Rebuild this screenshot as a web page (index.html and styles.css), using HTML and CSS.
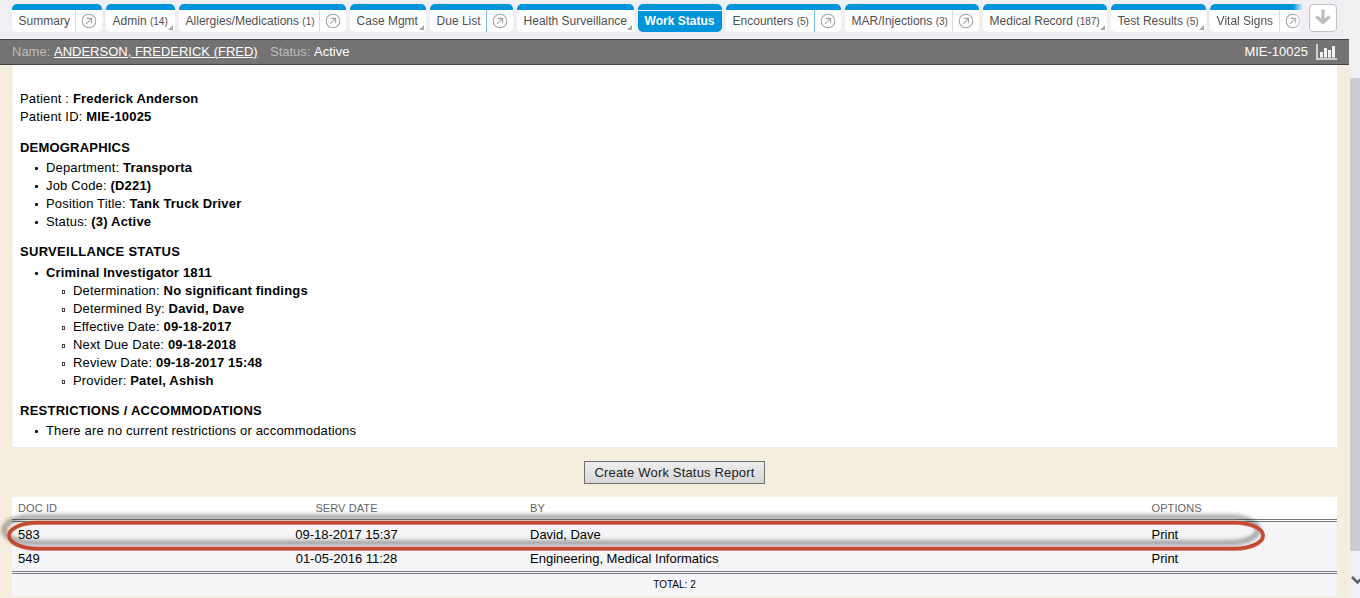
FILE: index.html
```html
<!DOCTYPE html>
<html lang="en">
<head>
<meta charset="utf-8">
<title>Work Status</title>
<link rel="stylesheet" href="styles.css">
</head>
<body>
<svg class="defs" width="0" height="0">
  <symbol id="open" viewBox="0 0 16 16"><circle cx="8" cy="8" r="6.8" fill="none" stroke="#a4a4a6" stroke-width="1.1"/><path d="M5.2 10.8 10.4 5.6M5.7 5.4h4.9v4.9" fill="none" stroke="#a4a4a6" stroke-width="1.1"/></symbol>
</svg>
<div class="app">
  <div class="main">
    <nav class="tabs">
      <div class="tab w-summary"><span class="label">Summary</span><span class="pop"><svg><use href="#open"/></svg></span></div>
      <div class="tab menu w-admin"><span class="label">Admin <small>(14)</small></span></div>
      <div class="tab w-allergies"><span class="label">Allergies/Medications <small>(1)</small></span><span class="pop"><svg><use href="#open"/></svg></span></div>
      <div class="tab menu w-case"><span class="label">Case Mgmt</span></div>
      <div class="tab w-due"><span class="label">Due List</span><span class="pop edge"><svg><use href="#open"/></svg></span></div>
      <div class="tab menu w-health"><span class="label">Health Surveillance</span></div>
      <div class="tab active w-work"><span class="label">Work Status</span></div>
      <div class="tab w-encounters"><span class="label">Encounters <small>(5)</small></span><span class="pop edge"><svg><use href="#open"/></svg></span></div>
      <div class="tab w-mar"><span class="label">MAR/Injections <small>(3)</small></span><span class="pop"><svg><use href="#open"/></svg></span></div>
      <div class="tab menu w-medical"><span class="label">Medical Record <small>(187)</small></span></div>
      <div class="tab menu w-test"><span class="label">Test Results <small>(5)</small></span></div>
      <div class="tab w-vital"><span class="label">Vital Signs</span><span class="pop"><svg><use href="#open"/></svg></span></div>
      <button class="more"><svg width="18" height="18" viewBox="0 0 18 18"><path d="M9 1.500v13M2.300 8.500 9 14.500l6.700-6" fill="none" stroke="#bfbfbf" stroke-width="3.400"/></svg></button>
    </nav>
    <header class="patient">
      <span class="key">Name:</span><a class="name">ANDERSON, FREDERICK (FRED)</a>
      <span class="key status">Status:</span><span class="state">Active</span>
      <span class="mrn">MIE-10025</span>
      <svg class="chart" width="21" height="16" viewBox="0 0 21 16"><path d="M1 0v15h20" fill="none" stroke="#f0f0f0" stroke-width="1.500"/><path d="M4 8h3v5.500H4zM8 4h3v9.500H8zM12 6h3v7.500h-3zM16 2h3v11.500h-3z" fill="#f2f2f2"/></svg>
    </header>
    <section class="report">
      <p>Patient : <b>Frederick Anderson</b></p>
      <p class="pid">Patient ID: <b>MIE-10025</b></p>
      <h2 class="h-demo">DEMOGRAPHICS</h2>
      <ul>
        <li>Department: <b>Transporta</b></li>
        <li>Job Code: <b>(D221)</b></li>
        <li>Position Title: <b>Tank Truck Driver</b></li>
        <li>Status: <b>(3) Active</b></li>
      </ul>
      <h2 class="h-surv">SURVEILLANCE STATUS</h2>
      <ul>
        <li><b>Criminal Investigator 1811</b>
          <ul class="sub">
            <li>Determination: <b>No significant findings</b></li>
            <li>Determined By: <b>David, Dave</b></li>
            <li>Effective Date: <b>09-18-2017</b></li>
            <li>Next Due Date: <b>09-18-2018</b></li>
            <li>Review Date: <b>09-18-2017 15:48</b></li>
            <li>Provider: <b>Patel, Ashish</b></li>
          </ul>
        </li>
      </ul>
      <h2 class="h-rest">RESTRICTIONS / ACCOMMODATIONS</h2>
      <ul><li>There are no current restrictions or accommodations</li></ul>
    </section>
    <div class="actions"><button class="create">Create Work Status Report</button></div>
    <div class="docs">
      <div class="row head"><span>DOC ID</span><span class="date">SERV DATE</span><span>BY</span><span>OPTIONS</span></div>
      <div class="row"><span>583</span><span class="date">09-18-2017 15:37</span><span>David, Dave</span><span>Print</span></div>
      <div class="row"><span>549</span><span class="date">01-05-2016 11:28</span><span>Engineering, Medical Informatics</span><span>Print</span></div>
      <div class="total">TOTAL: 2</div>
      <svg class="ring" width="1290" height="60" viewBox="0 0 1290 60"><rect x="21" y="18" width="1254" height="26" rx="28" ry="13" fill="none" stroke="#de9a8b" stroke-width="4"/><rect x="21" y="17.500" width="1254" height="26" rx="28" ry="13" fill="none" stroke="#c04a32" stroke-width="3.600"/></svg>
    </div>
  </div>
  <aside class="scroll"><div class="thumb"></div><svg width="10" height="47" viewBox="0 0 10 47"><path d="M2 26l5.500 5.500 5.500-5.500" fill="none" stroke="#606060" stroke-width="2.600"/></svg></aside>
</div>
</body>
</html>
```
FILE: styles.css
```css
*, *::before, *::after { box-sizing: border-box; }
body { margin: 0; font: 13px/18px "Liberation Sans", Arial, sans-serif; color: #000; background: #f5eddd; overflow: hidden; }
.defs { display: block; height: 0; }
.app { display: flex; height: 598px; }
.main { width: 1349px; flex: none; }
p, h2, ul { margin: 0; padding: 0; }

.tabs { display: flex; gap: 4px; height: 39px; padding: 4px 0 7px 12px; background: #efeff4; font-size: 12px; color: #4f4f51; }
.tab { display: flex; position: relative; flex: none; height: 28px; border-top: 6px solid #0095da; border-radius: 5px; background: #fff; overflow: hidden; white-space: nowrap; }
.label { flex: 1; padding: 2px 0 0 6.6px; }
.tab small { font-size: 10px; }
.pop { width: 27px; border-left: 1px solid #dcdcdf; padding: 3px 0 0 4.5px; }
.pop.edge { border-left-color: #7fbfe0; }
.pop svg { display: block; width: 16px; height: 16px; }
.menu::after { content: ""; position: absolute; right: 2px; bottom: 2px; width: 5px; height: 5px; background: #a6a6a6; clip-path: polygon(100% 0, 100% 100%, 0 100%); }
.active { background: #0095da; color: #fff; font-weight: bold; }
.active::before { content: ""; position: absolute; left: 0; right: 0; top: 0; height: 1px; background: #e6f4fb; }
.w-summary { width: 90px; }
.w-admin { width: 69px; }
.w-allergies { width: 167px; }
.w-case { width: 76px; }
.w-due { width: 83px; }
.w-health { width: 117px; }
.w-work { width: 84px; }
.w-encounters { width: 115px; }
.w-mar { width: 134px; }
.w-medical { width: 124px; }
.w-test { width: 95px; }
.w-vital { width: 93px; border-top-right-radius: 0; border-bottom-right-radius: 0; -webkit-mask: linear-gradient(90deg, #000 83px, transparent 93px); mask: linear-gradient(90deg, #000 83px, transparent 93px); }
.w-vital .pop { width: 24px; }
.more { display: flex; justify-content: center; align-items: center; width: 28px; height: 28px; margin-left: 2px; padding: 0 0 2px; border: 1px solid #c2c2c4; border-radius: 4px; background: #fff; }

.patient { display: flex; height: 26px; padding: 3px 12px 0; border-top: 1px solid #414345; border-bottom: 1px solid #414345; background: #737373; color: #fff; }
.key { color: #bcbcbc; width: 42px; }
.name { text-decoration: underline; width: 216px; white-space: nowrap; }
.status { width: 44px; }
.mrn { margin-left: auto; }
.chart { margin: 1px 0 0 8px; }

.report { height: 383px; width: 1325px; margin-left: 12px; padding: 25px 0 0 7px; background: #fff; border-left: 1px solid #f6f3ec; border-bottom: 1px solid #ececec; letter-spacing: 0.16px; }
.report b { letter-spacing: 0.18px; }
h2 { font-size: 13px; line-height: 18px; }
.h-demo { margin: 13px 0 2px; letter-spacing: 0.2px; }
.h-surv { margin: 12px 0 3px; letter-spacing: 0.3px; }
.h-rest { margin: 12px 0 2px; letter-spacing: 0.25px; }
ul { list-style: none; }
li { position: relative; padding-left: 26px; }
li::before { content: ""; position: absolute; left: 15px; top: 8px; width: 3px; height: 3px; border-radius: 1px; background: #111; }
.sub { margin-left: 1px; }
.sub li::before { left: 15px; top: 8px; width: 3px; height: 4px; border: 1px solid #444; border-radius: 0; background: none; }

.actions { height: 49px; padding: 13px 0 0 584px; }
.create { display: block; width: 181px; height: 23px; padding: 0; border: 1px solid #707070; background: linear-gradient(#eee, #d6d6d6); font: 13px/21px "Liberation Sans", Arial, sans-serif; color: #222; letter-spacing: 0.17px; }

.docs { position: relative; width: 1325px; height: 99px; margin-left: 12px; background: #f5f5f8; }
.row { display: grid; grid-template-columns: 219px 293px 621.5px 1fr; height: 24px; padding: 4px 0 0 6px; }
.date { text-align: center; padding-right: 74px; }
.head { height: 25px; padding-top: 2px; font-size: 11px; letter-spacing: 0.1px; color: #666; background: #fff; border-bottom: 3px double #77777d; }
.total { height: 25px; margin-top: 1px; padding-top: 2px; border-top: 3px double #77777d; text-align: center; font-size: 10px; }
.ring { position: absolute; left: -24px; top: 8px; filter: drop-shadow(-5px -5.5px 2px rgba(0,0,0,.42)); pointer-events: none; }

.scroll { width: 11px; flex: none; padding: 78px 0 0 1px; background: #f0f0f0; overflow: hidden; }
.thumb { height: 473px; background: #cdcdcd; }
.scroll svg { display: block; }
```
